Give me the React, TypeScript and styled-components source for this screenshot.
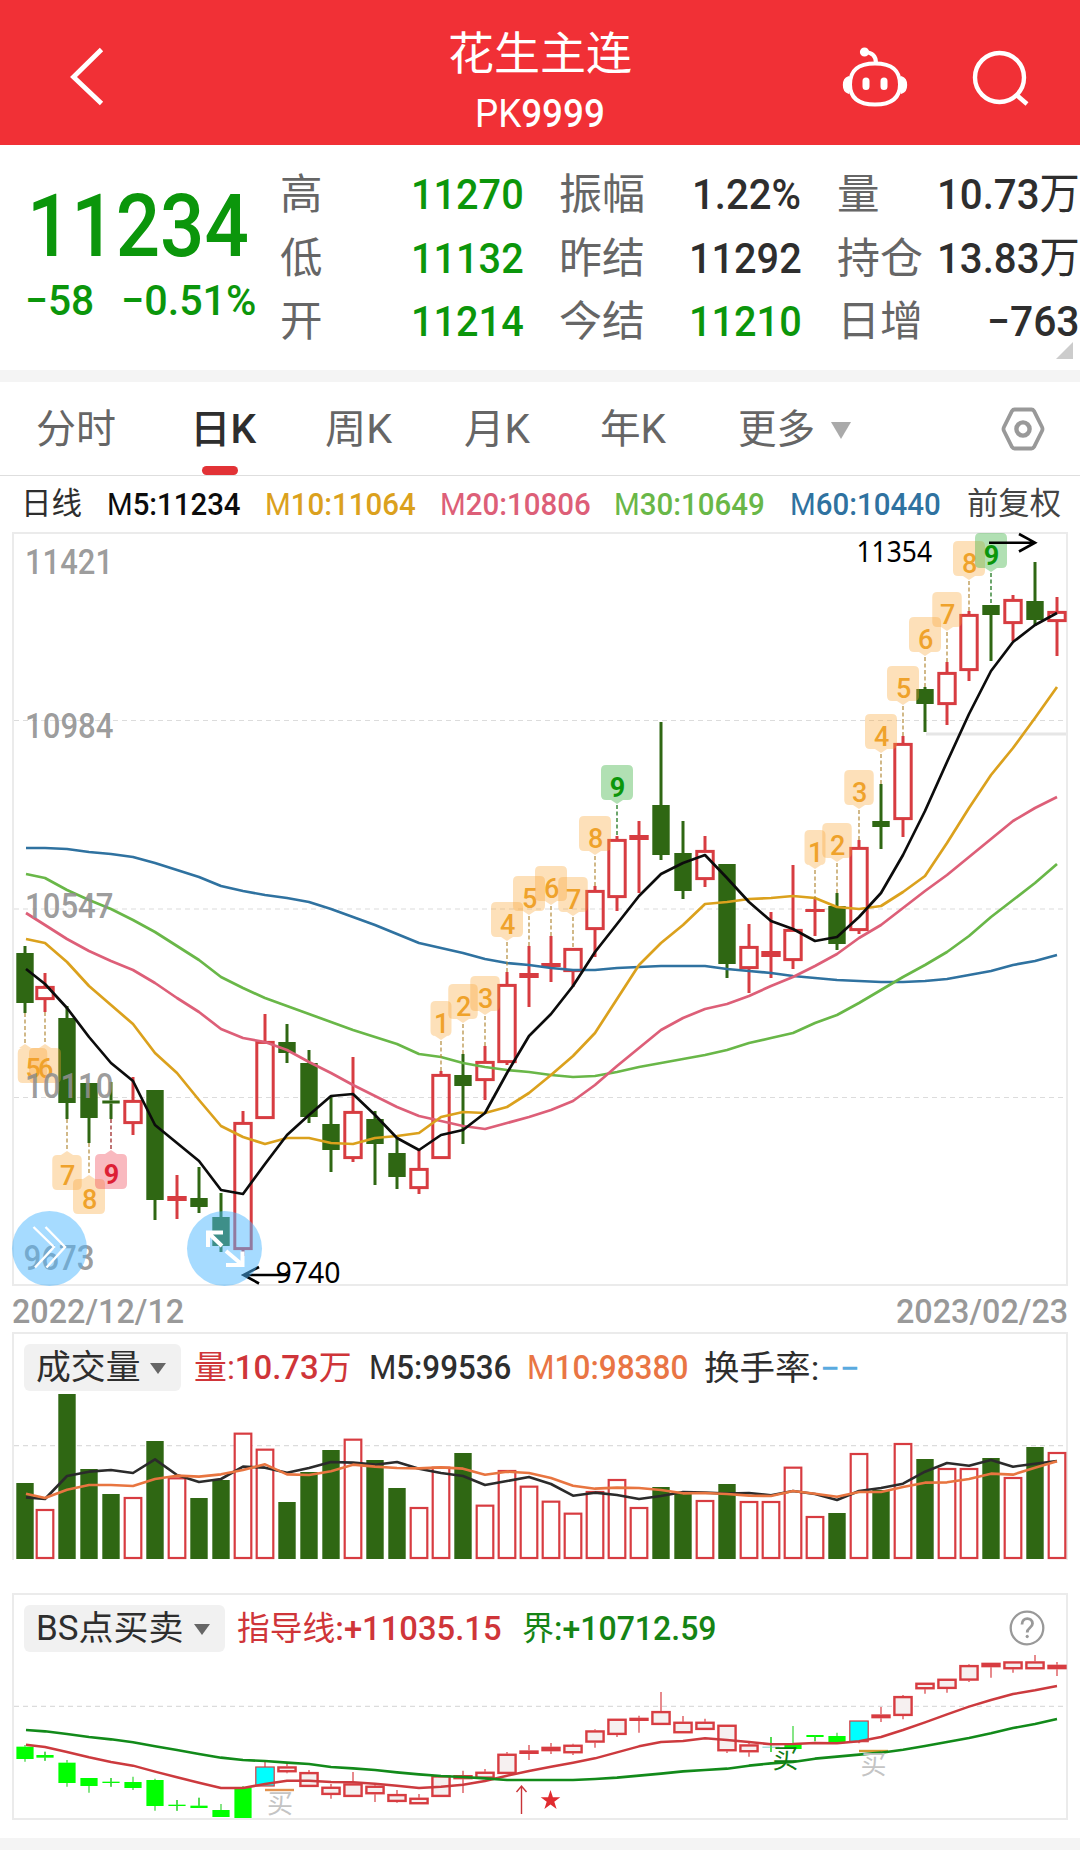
import React, { useLayoutEffect, useRef, useState } from "react";
import styled, { createGlobalStyle } from "styled-components";

const SANS = `Roboto, "Noto Sans CJK SC", sans-serif`;

const C = {
  brand: "#f13036",
  down: "#0b960b",
  ink: "#2e2e2e",
  label: "#666",
  mute: "#999",
  line: "#ebebeb",
  red: "#d73c41",
  bar: "#2f6713",
  ma5: "#0c0c0c",
  ma10: "#dba11d",
  ma20: "#dd5f78",
  ma30: "#69b748",
  ma60: "#2f72a0",
};

const Global = createGlobalStyle`
  * { box-sizing: border-box; }
  body { margin: 0; background: #fff; }
`;

const Page = styled.main`
  width: 1080px;
  height: 1858px;
  overflow: hidden;
  background: #fff;
  font-family: ${SANS};
  color: ${C.ink};
`;

/* ---------- text squeezed to a DIN-like width ---------- */

const FitBox = styled.span<{ $w: number; $size: number; $color?: string; $weight?: number }>`
  display: block;
  flex: none;
  width: ${(p) => p.$w}px;
  height: 1.2em;
  line-height: 1.2;
  font-size: ${(p) => p.$size}px;
  font-weight: ${(p) => p.$weight ?? 500};
  color: ${(p) => p.$color ?? "inherit"};
  white-space: nowrap;
`;
const FitInner = styled.span`
  display: inline-block;
  transform-origin: 0 50%;
`;
const Light = styled.span`
  font-weight: 400;
`;

type FitProps = { w: number; size: number; color?: string; weight?: number; children: React.ReactNode };

function Fit({ w, size, color, weight, children }: FitProps) {
  const ref = useRef<HTMLSpanElement>(null);
  const [scale, setScale] = useState(1);
  useLayoutEffect(() => {
    if (ref.current) setScale(w / ref.current.offsetWidth);
  }, [w]);
  return (
    <FitBox $w={w} $size={size} $color={color} $weight={weight}>
      <FitInner ref={ref} style={{ transform: `scaleX(${scale})` }}>
        {children}
      </FitInner>
    </FitBox>
  );
}

/* ---------- header ---------- */

const Header = styled.header`
  display: grid;
  grid-template-columns: 1fr 190px 1fr;
  height: 145px;
  background: ${C.brand};
  color: #fff;
`;
const HeaderSide = styled.div<{ $end?: boolean }>`
  display: flex;
  justify-content: ${(p) => (p.$end ? "flex-end" : "flex-start")};
  gap: 62px;
  padding: ${(p) => (p.$end ? "44px 48px 0 0" : "44px 0 0 66px")};
`;
const TitleBlock = styled.div`
  display: flex;
  flex-direction: column;
  align-items: center;
  padding-top: 28px;
`;
const Subtitle = styled.div`
  margin-top: 9px;
`;

/* ---------- quote ---------- */

const Quote = styled.section`
  position: relative;
  display: grid;
  grid-template-columns: 280px 279px 278px 243px;
  height: 225px;
`;
const PriceBlock = styled.div`
  display: flex;
  flex-direction: column;
  padding: 30px 0 0 27px;
  color: ${C.down};
`;
const Change = styled.div`
  display: flex;
  gap: 27px;
  margin: -4px 0 0 -2px;
`;
const Col = styled.div<{ $pr: number }>`
  padding: 18px ${(p) => p.$pr}px 0 0;
`;
const Stat = styled.div`
  display: flex;
  align-items: center;
  justify-content: space-between;
  height: 63.6px;
`;
const Corner = styled.i`
  position: absolute;
  right: 7px;
  bottom: 11px;
  border-left: 17px solid transparent;
  border-bottom: 17px solid #ccc;
`;
const Band = styled.div`
  height: 12px;
  background: #f4f4f4;
`;

/* ---------- tabs ---------- */

const Tabs = styled.nav`
  display: grid;
  grid-template-columns: 154px 135px 139px 136px 138px 1fr 44px;
  align-items: center;
  height: 94px;
  padding: 0 35px 0 36px;
  border-bottom: 1px solid #dedede;
`;
const Tab = styled.div<{ $active?: boolean }>`
  position: relative;
  display: flex;
  align-items: center;
  gap: 16px;
  padding-top: 3px;
  color: ${(p) => (p.$active ? C.ink : C.label)};
  &::after {
    content: "";
    display: ${(p) => (p.$active ? "block" : "none")};
    position: absolute;
    left: 12px;
    bottom: -21px;
    width: 36px;
    height: 9px;
    border-radius: 5px;
    background: #e23236;
  }
`;
const Caret = styled.i<{ $w: number; $h: number; $color: string }>`
  border: ${(p) => p.$w / 2}px solid transparent;
  border-bottom: 0;
  border-top: ${(p) => p.$h}px solid ${(p) => p.$color};
`;

const MaRow = styled.div`
  display: grid;
  grid-template-columns: 86px 158px 175px 174px 176px 177px 1fr;
  align-items: center;
  height: 56px;
  padding-left: 21px;
`;

/* ---------- chart panels ---------- */

const Panel = styled.section<{ $h: number; $open?: boolean }>`
  position: relative;
  display: flex;
  flex-direction: column;
  height: ${(p) => p.$h}px;
  margin: 0 12px;
  border: 2px solid ${C.line};
  border-bottom-width: ${(p) => (p.$open ? 0 : 2)}px;
`;
const Plot = styled.svg`
  display: block;
  overflow: visible;
  font-family: ${SANS};
`;
const DateRow = styled.div`
  display: flex;
  justify-content: space-between;
  align-items: center;
  height: 46px;
  padding: 4px 12px 0;
`;
const Legend = styled.div`
  display: flex;
  align-items: center;
  height: 57px;
  padding: 10px 21px 0 10px;
`;
const Chip = styled.div<{ $w: number }>`
  display: flex;
  flex: none;
  align-items: center;
  justify-content: space-between;
  width: ${(p) => p.$w}px;
  height: 47px;
  padding: 1px 15px 0 12px;
  border-radius: 6px;
  background: #f1f1f1;
`;
const LegendItem = styled.div<{ $ml: number }>`
  margin-left: ${(p) => p.$ml}px;
  padding-top: 2px;
`;
const Help = styled.div`
  margin: -2px 0 0 auto;
  height: 36px;
`;
const Spacer = styled.div<{ $h: number }>`
  height: ${(p) => p.$h}px;
`;
const RoundButton = styled.button<{ $left: number }>`
  position: absolute;
  left: ${(p) => p.$left}px;
  bottom: -2px;
  width: 75px;
  height: 75px;
  padding: 0;
  border: 0;
  border-radius: 50%;
  background: rgba(77, 184, 255, 0.5);
`;

/* ---------- data ---------- */

type Kind = "r" | "g" | "s" | "l" | "c";
type Candle = [Kind, number, number, number, number];

const X = (i: number) => (i === 0 ? 25 : 23 + 22 * i);

const CANDLES: Candle[] = [
  ["g", 953, 1003, 946, 1013], ["r", 986, 1000, 973, 1012], ["g", 1018, 1103, 1006, 1119], ["g", 1083, 1118, 1083, 1143],
  ["g", 1100.5, 1103.5, 1082, 1119], ["r", 1100, 1124, 1077, 1135], ["g", 1090, 1200, 1090, 1220], ["s", 1196, 1201, 1175, 1219],
  ["g", 1198, 1207, 1167, 1213], ["g", 1217, 1246, 1193, 1252], ["r", 1122, 1250, 1111, 1256], ["r", 1041, 1119, 1014, 1119],
  ["g", 1042, 1053, 1024, 1063], ["g", 1063, 1117, 1050, 1123], ["g", 1124, 1150, 1097, 1172], ["r", 1111, 1159, 1057, 1162],
  ["g", 1119, 1144, 1111, 1185], ["g", 1153, 1177, 1138, 1189], ["r", 1168, 1189, 1150, 1194], ["r", 1074, 1159, 1071, 1159],
  ["g", 1075, 1086, 1054, 1144], ["r", 1061, 1081, 1046, 1100], ["r", 984, 1063, 972, 1065], ["s", 973, 978, 946, 1007],
  ["s", 963, 967, 936, 982], ["r", 948, 972, 948, 987], ["r", 890, 930, 886, 957], ["r", 839, 898, 836, 911],
  ["s", 835, 840, 821, 893], ["g", 805, 855, 722, 860], ["g", 853, 891, 821, 899], ["r", 850, 880, 836, 887],
  ["g", 864, 964, 864, 978], ["r", 946, 969, 924, 993], ["s", 951, 957, 912, 978], ["r", 929, 961, 865, 969],
  ["s", 909, 912, 899, 936], ["g", 906, 944, 893, 950], ["r", 847, 931, 840, 934], ["g", 821, 827, 784, 849],
  ["r", 743, 820, 736, 837], ["g", 689, 704, 687, 732], ["r", 672, 705, 662, 725], ["r", 614, 671, 611, 681],
  ["g", 605, 615, 605, 661], ["r", 599, 624, 595, 641], ["g", 601, 620, 562, 626], ["r", 611, 622, 597, 656],
];

const M5 = [969, 984, 1008, 1037, 1063, 1081, 1125, 1143, 1161, 1190, 1194, 1164, 1135, 1115, 1096, 1094, 1115, 1138, 1150, 1135, 1130, 1113, 1073, 1036, 1014, 986, 952, 924, 896, 874, 863, 855, 878, 902, 921, 929, 941, 937, 917, 893, 855, 811, 762, 714, 671, 642, 625, 613];
const M10 = [939, 943, 962, 986, 1005, 1024, 1053, 1073, 1100, 1126, 1137, 1144, 1138, 1138, 1143, 1144, 1138, 1136, 1133, 1117, 1112, 1113, 1107, 1093, 1075, 1056, 1033, 999, 965, 943, 925, 904, 902, 899, 898, 896, 898, 907, 909, 906, 892, 876, 843, 808, 775, 748, 718, 687];
const M20 = [913, 925, 939, 951, 961, 970, 983, 998, 1012, 1029, 1038, 1042, 1050, 1062, 1073, 1085, 1096, 1107, 1116, 1121, 1126, 1129, 1123, 1117, 1110, 1101, 1085, 1066, 1048, 1030, 1018, 1009, 1004, 996, 986, 977, 966, 954, 938, 925, 908, 891, 875, 857, 839, 821, 808, 797];
const M30 = [874, 878, 890, 900, 909, 920, 932, 946, 960, 977, 988, 998, 1006, 1014, 1022, 1030, 1037, 1044, 1054, 1057, 1063, 1067, 1070, 1072, 1075, 1077, 1076, 1072, 1067, 1063, 1059, 1055, 1050, 1043, 1038, 1033, 1023, 1015, 1003, 990, 977, 965, 952, 936, 917, 900, 883, 864];
const M60 = [848, 848, 849, 852, 854, 857, 863, 870, 877, 886, 891, 895, 898, 902, 909, 917, 925, 934, 943, 948, 953, 959, 963, 965, 968, 970, 970, 968, 967, 966, 966, 966, 969, 971, 973, 976, 978, 980, 981, 982, 982, 981, 979, 975, 971, 965, 961, 955];

type Mark = { i: number; n: string; y: number; tone?: "green" | "red"; below?: boolean; dx?: number };
const MARKS: Mark[] = [
  { i: 0, n: "5", y: 1044, below: true, dx: 7.5 }, { i: 1, n: "6", y: 1044, below: true }, { i: 2, n: "7", y: 1151, below: true },
  { i: 3, n: "8", y: 1175, below: true }, { i: 4, n: "9", y: 1150, below: true, tone: "red" },
  { i: 19, n: "1", y: 1001 }, { i: 20, n: "2", y: 984 }, { i: 21, n: "3", y: 976 }, { i: 22, n: "4", y: 902 },
  { i: 23, n: "5", y: 876 }, { i: 24, n: "6", y: 866 }, { i: 25, n: "7", y: 877 }, { i: 26, n: "8", y: 816 },
  { i: 27, n: "9", y: 765, tone: "green" },
  { i: 36, n: "1", y: 830 }, { i: 37, n: "2", y: 823 }, { i: 38, n: "3", y: 770 }, { i: 39, n: "4", y: 714 },
  { i: 40, n: "5", y: 666 }, { i: 41, n: "6", y: 617 }, { i: 42, n: "7", y: 592 }, { i: 43, n: "8", y: 541 },
  { i: 44, n: "9", y: 533, tone: "green" },
];

const VOL = [489, 570, 222, 447, 522, 534, 363, 475, 534, 480, 341, 389, 546, 456, 390, 359, 420, 504, 564, 443, 399, 557, 453, 500, 545, 581, 516, 480, 564, 501, 519, 543, 492, 546, 546, 443, 591, 579, 402, 510, 372, 417, 447, 447, 414, 474, 381, 399];
const VM5 = [532, 537, 468, 455, 450, 459, 418, 465, 486, 477, 440, 443, 458, 444, 426, 428, 434, 426, 446, 459, 468, 495, 483, 471, 492, 527, 518, 525, 537, 528, 516, 518, 521, 519, 526, 513, 522, 540, 513, 504, 491, 455, 429, 437, 420, 440, 431, 423];
const VM10 = [521, 534, 509, 495, 495, 498, 477, 467, 470, 463, 450, 433, 463, 465, 454, 434, 440, 444, 445, 442, 446, 464, 455, 459, 474, 497, 506, 503, 504, 510, 520, 519, 522, 527, 528, 513, 521, 530, 516, 516, 501, 488, 487, 477, 461, 464, 443, 424];
const GREEN_VOL = new Set([0, 2, 3, 4, 6, 8, 9, 12, 13, 14, 16, 17, 20, 29, 30, 32, 37, 39, 41, 44, 46]);

const BS: Candle[] = [
  ["l", 500, 537, 495, 545], ["l", 525, 533, 515, 542], ["l", 548, 609, 540, 620], ["l", 594, 618, 594, 638],
  ["l", 605, 609, 594, 620], ["l", 606, 624, 590, 630], ["l", 600, 678, 596, 692], ["l", 674, 678, 660, 692],
  ["l", 677, 684, 653, 684], ["l", 690, 711, 672, 711], ["l", 622, 714, 618, 714], ["c", 561, 618, 542, 618],
  ["r", 559, 577, 550, 580], ["r", 576, 621, 570, 621], ["r", 620, 645, 612, 656], ["r", 610, 651, 576, 651],
  ["r", 617, 643, 615, 666], ["r", 642, 666, 630, 668], ["r", 653, 673, 642, 673], ["r", 586, 651, 586, 651],
  ["s", 585, 598, 572, 639], ["r", 575, 596, 567, 596], ["r", 521, 582, 516, 582], ["s", 511, 522, 495, 540],
  ["s", 500, 514, 489, 522], ["r", 494, 520, 491, 525], ["r", 451, 488, 448, 503], ["r", 416, 465, 416, 471],
  ["s", 413, 423, 407, 458], ["r", 393, 435, 336, 435], ["r", 425, 460, 408, 460], ["r", 425, 450, 416, 450],
  ["r", 434, 514, 434, 519], ["r", 493, 517, 485, 530], ["l", 500, 503, 471, 516], ["l", 490, 507, 438, 507],
  ["l", 465, 471, 465, 484], ["l", 468, 488, 458, 488], ["c", 423, 485, 423, 490], ["s", 403, 415, 381, 426],
  ["r", 348, 408, 345, 418], ["r", 308, 328, 308, 341], ["r", 296, 327, 296, 338], ["r", 255, 302, 253, 306],
  ["s", 248, 262, 248, 293], ["r", 244, 268, 244, 278], ["r", 244, 268, 225, 268], ["s", 254, 268, 246, 288],
];
const GUIDE = [494, 501, 516, 532, 546, 557, 575, 592, 608, 624, 624, 612, 602, 602, 606, 607, 611, 617, 624, 620, 614, 603, 587, 573, 560, 548, 535, 517, 499, 486, 483, 475, 480, 486, 493, 492, 489, 490, 484, 471, 450, 427, 403, 380, 360, 342, 331, 318];
const BOUND = [450, 454, 462, 471, 478, 487, 499, 510, 522, 533, 540, 543, 548, 552, 561, 565, 570, 577, 583, 588, 591, 595, 600, 600, 600, 600, 597, 593, 587, 581, 574, 570, 566, 557, 550, 546, 536, 530, 524, 518, 509, 498, 486, 474, 460, 444, 432, 417];

const volY = (v: number) => 1320 + v / 3;
const bsY = (v: number) => 1580 + v / 3;

/* ---------- chart pieces ---------- */

function Curve({ data, color, y = (v) => v, w = 2.7 }: { data: number[]; color: string; y?: (v: number) => number; w?: number }) {
  const points = data.map((v, i) => `${i === 0 ? 26 : X(i)},${y(v)}`).join(" ");
  return <polyline points={points} fill="none" stroke={color} strokeWidth={w} strokeLinejoin="round" />;
}

function Grid({ y }: { y: number }) {
  return <line x1={14} x2={1066} y1={y} y2={y} stroke="#dcdcdc" strokeWidth={1.2} strokeDasharray="5 4" />;
}

function CandleShape({ x, c }: { x: number; c: Candle }) {
  const [kind, top, bottom, hi, lo] = c;
  const color = kind === "g" ? C.bar : C.red;
  return (
    <g>
      <line x1={x} x2={x} y1={hi} y2={top} stroke={color} strokeWidth={3} />
      <line x1={x} x2={x} y1={bottom} y2={lo} stroke={color} strokeWidth={3} />
      {kind === "r" ? (
        <rect x={x - 8.2} y={top + 1.4} width={16.4} height={bottom - top - 2.8} fill="none" stroke={color} strokeWidth={3} />
      ) : (
        <rect x={x - (kind === "s" ? 9.7 : 8.7)} y={top} width={kind === "s" ? 19.4 : 17.4} height={bottom - top} fill={color} />
      )}
    </g>
  );
}

function MarkShape({ m }: { m: Mark }) {
  const lineX = X(m.i);
  const x = lineX + (m.dx ?? 0);
  const w = m.n === "1" ? 21 : "237".includes(m.n) || m.dx ? 29.5 : 32;
  const fill = m.tone === "green" ? "rgba(70,180,75,.42)" : m.tone === "red" ? "rgba(238,60,78,.36)" : "rgba(250,165,50,.34)";
  const ink = m.tone === "green" ? "#0b960b" : m.tone === "red" ? "#dd1f35" : "#efa22b";
  const dash = m.tone === "green" ? "#0b6b0b" : m.tone === "red" ? "#961818" : "#b38a3a";
  const a = x - w / 2;
  const path = m.below
    ? `M${a + 5},${m.y + 4}H${lineX - 6}L${lineX},${m.y}L${lineX + 6},${m.y + 4}H${a + w - 5}q5,0 5,5v25q0,5 -5,5H${a + 5}q-5,0 -5,-5v-25q0,-5 5,-5z`
    : `M${a + 5},${m.y}h${w - 10}q5,0 5,5v25q0,5 -5,5H${x + 6}L${x},${m.y + 39}L${x - 6},${m.y + 35}H${a + 5}q-5,0 -5,-5v-25q0,-5 5,-5z`;
  const c = CANDLES[m.i];
  const y1 = m.below ? c[4] : m.y + 40;
  const y2 = m.below ? m.y : c[3];
  return (
    <g>
      <line x1={lineX} x2={lineX} y1={y1} y2={y2} stroke={dash} strokeWidth={1.2} strokeDasharray="4 2.5" />
      <path d={path} fill={fill} />
      <text x={x + 0.6} y={m.y + (m.below ? 33.5 : 31.5)} fontSize={27} fontWeight={m.tone ? 700 : 500} fill={ink} textAnchor="middle">
        {m.n}
      </text>
    </g>
  );
}

const AXIS: [string, number, number, number][] = [
  ["11421", 574, 25, 88], ["10984", 738, 25, 88.5], ["10547", 918, 25, 88.5], ["10110", 1098, 25, 88.5], ["9673", 1270, 23.5, 71],
];

function PriceChart() {
  return (
    <Plot width={1052} height={750} viewBox="14 534 1052 750">
      {[720.5, 909, 1097.5].map((y) => (
        <Grid key={y} y={y} />
      ))}
      <line x1={926} x2={1066} y1={734} y2={734} stroke="#e6e6e6" strokeWidth={3} />
      {CANDLES.map((c, i) => (
        <CandleShape key={i} x={X(i)} c={c} />
      ))}
      <Curve data={M60} color={C.ma60} />
      <Curve data={M30} color={C.ma30} />
      <Curve data={M20} color={C.ma20} />
      <Curve data={M10} color={C.ma10} />
      <Curve data={M5} color={C.ma5} />
      {MARKS.map((m) => (
        <MarkShape key={m.i} m={m} />
      ))}
      {AXIS.map(([t, y, x, w]) => (
        <text key={t} x={x} y={y} fontSize={34.5} fontWeight={500} fill="#8f8f8f" fillOpacity={0.9} textLength={w} lengthAdjust="spacingAndGlyphs">
          {t}
        </text>
      ))}
      <g fontFamily={`"Noto Sans", sans-serif`} fontSize={28.5} fill="#000">
        <text x={856.5} y={562} textLength={75.5} lengthAdjust="spacingAndGlyphs">11354</text>
        <text x={275.5} y={1283} textLength={65} lengthAdjust="spacingAndGlyphs">9740</text>
      </g>
      <g fill="none" stroke="#000" strokeWidth={2.6}>
        <path d="M989,542.7H1034M1019,534L1035,542.7L1019,551.5" />
        <path d="M289,1275H245M259,1267L243.5,1275L259,1283.5" />
      </g>
    </Plot>
  );
}

function VolumeChart() {
  return (
    <Plot width={1052} height={168} viewBox="14 1391 1052 168">
      <Grid y={1445.7} />
      {VOL.map((v, i) => {
        const top = volY(v);
        return GREEN_VOL.has(i) ? (
          <rect key={i} x={X(i) - 8.7} y={top} width={17.4} height={1559 - top} fill={C.bar} />
        ) : (
          <rect key={i} x={X(i) - 8.3} y={top} width={16.6} height={1558 - top} fill="#fff" stroke={C.red} strokeWidth={2.2} />
        );
      })}
      <Curve data={VM5} color="#2b2b2b" y={volY} w={2.6} />
      <Curve data={VM10} color="#e87540" y={volY} w={2.6} />
    </Plot>
  );
}

function BsCandle({ x, c }: { x: number; c: Candle }) {
  const [kind, t, b, h, l] = c;
  const top = bsY(t);
  const height = (b - t) / 3;
  const wick = kind === "l" ? "#35d435" : C.red;
  return (
    <g>
      <path d={`M${x},${bsY(h)}V${top}M${x},${bsY(b)}V${bsY(l)}`} stroke={wick} strokeWidth={1.2} />
      {kind === "r" && (
        <rect x={x - 8.6} y={top + 1.1} width={17.2} height={height - 2.2} fill="#f6f0f0" stroke={C.red} strokeWidth={2.4} />
      )}
      {kind === "s" && <rect x={x - 9.7} y={top} width={19.4} height={height} fill={C.red} />}
      {kind === "l" && (
        <>
          <rect x={x - 8.6} y={top} width={17.2} height={height} fill={t === 500 && b === 503 ? "#7cc" : "#0f0"} />
          {height < 3 && <line x1={x} x2={x} y1={bsY(h)} y2={bsY(l)} stroke={wick} strokeWidth={1.2} />}
        </>
      )}
      {kind === "c" && <rect x={x - 9.2} y={top} width={18.4} height={height} fill="#0ff" stroke={C.red} strokeWidth={1.2} />}
    </g>
  );
}

function BsChart() {
  return (
    <Plot width={1052} height={167} viewBox="14 1652 1052 167">
      <Grid y={1706.3} />
      {BS.map((c, i) => (
        <BsCandle key={i} x={X(i)} c={c} />
      ))}
      <line x1={265} x2={294} y1={1790} y2={1790} stroke="#e2924f" strokeWidth={2.4} />
      <line x1={859} x2={888} y1={1751} y2={1751} stroke="#d0982f" strokeWidth={2.4} />
      <Curve data={GUIDE} color="#cc3a3e" y={bsY} w={2.5} />
      <Curve data={BOUND} color="#128a1a" y={bsY} w={2.6} />
      <g fontSize={26}>
        <text x={267} y={1812.5} fill="#c4c4c4">买</text>
        <text x={772.5} y={1768} fill="#0f7d14">买</text>
        <text x={860.5} y={1774} fill="#c4c4c4">买</text>
      </g>
      <path d="M521.5,1814V1787M516.5,1792L521.5,1786L526.5,1792" fill="none" stroke="#c83438" strokeWidth={1.4} />
      <path
        d="M550.5,1790L552.9,1797.2H560.3L554.3,1801.7L556.6,1809L550.5,1804.5L544.4,1809L546.7,1801.7L540.7,1797.2H548.1Z"
        fill="#e02b2f"
      />
    </Plot>
  );
}

/* ---------- icons ---------- */

const BackIcon = () => (
  <svg width="40" height="66" viewBox="0 0 40 66" fill="none" stroke="#fff" strokeWidth="4.8">
    <path d="M35.5 5.5L7.5 33L35.5 59.5" />
  </svg>
);
const RobotIcon = () => (
  <svg width="66" height="64" viewBox="842 44 66 64" fill="none" stroke="#fff" strokeWidth="4">
    <path d="M875 63.5C893 63.5 900 71 900 84.500C900 98 892 104.500 875 104.500C858 104.500 850 98 850 84.500C850 71 857 63.500 875 63.500Z" />
    <path d="M876 63C876 56 872 52.500 865 52" />
    <circle cx="864.5" cy="52" r="2.6" fill="#fff" />
    <path d="M848.500 77C842 79 842 91 848.500 93Z M901.500 77C908 79 908 91 901.500 93Z" fill="#fff" strokeWidth="1.6" />
    <path d="M866 81V86.500M884 81V86.500" strokeWidth="7" strokeLinecap="round" />
  </svg>
);
const SearchIcon = () => (
  <svg width="62" height="64" viewBox="970 44 62 64" fill="none" stroke="#fff" strokeWidth="4.400">
    <circle cx="999.5" cy="77.5" r="24.5" />
    <path d="M1016 94.500L1027 104" strokeWidth="4.4" />
  </svg>
);
const GearIcon = () => (
  <svg width="44" height="44" viewBox="0 0 44 44" fill="none" stroke="#999" strokeWidth="3.8">
    <path d="M13.500 2.500H30.500Q32 2.500 33 4L41 20Q42 22 41 24L33 40Q32 41.500 30.500 41.500H13.500Q12 41.500 11 40L3 24Q2 22 3 20L11 4Q12 2.500 13.500 2.500Z" />
    <circle cx="22" cy="22" r="6.600" strokeWidth="4.4" />
  </svg>
);
const HelpIcon = () => (
  <svg width="36" height="36" viewBox="0 0 36 36" fill="none" stroke="#999" strokeWidth="2.3">
    <circle cx="18" cy="18" r="16.300" />
    <path d="M13 14.500C13 6.500 23.500 7 23.500 13.500C23.500 18 18.200 17.500 18.200 22.500" strokeWidth="2.8" />
    <circle cx="18.200" cy="26.500" r="1.200" fill="#999" strokeWidth="1" />
  </svg>
);

/* ---------- page ---------- */

type StatDef = { label: string; value: string; w: number; color?: string };
const STATS: { pr: number; rows: StatDef[] }[] = [
  {
    pr: 36,
    rows: [
      { label: "高", value: "11270", w: 112.5, color: C.down },
      { label: "低", value: "11132", w: 112.5, color: C.down },
      { label: "开", value: "11214", w: 112.5, color: C.down },
    ],
  },
  {
    pr: 36,
    rows: [
      { label: "振幅", value: "1.22%", w: 109 },
      { label: "昨结", value: "11292", w: 112.5 },
      { label: "今结", value: "11210", w: 112.5, color: C.down },
    ],
  },
  {
    pr: 0,
    rows: [
      { label: "量", value: "10.73万", w: 143 },
      { label: "持仓", value: "13.83万", w: 143 },
      { label: "日增", value: "−763", w: 93 },
    ],
  },
];

const renderValue = (v: string) =>
  v.endsWith("万") ? (
    <>
      {v.slice(0, -1)}
      <Light>万</Light>
    </>
  ) : (
    v
  );

const TABS: { text: string; w: number; active?: boolean }[] = [
  { text: "分时", w: 80 },
  { text: "日K", w: 66, active: true },
  { text: "周K", w: 67 },
  { text: "月K", w: 66 },
  { text: "年K", w: 66 },
];

const AVERAGES: [string, string, number, string][] = [
  ["M", "5:11234", 134, C.ma5],
  ["M", "10:11064", 151, C.ma10],
  ["M", "20:10806", 151, C.ma20],
  ["M", "30:10649", 151, C.ma30],
  ["M", "60:10440", 151, C.ma60],
];

export default function App() {
  return (
    <Page>
      <Global />
      <Header>
        <HeaderSide>
          <BackIcon />
        </HeaderSide>
        <TitleBlock>
          <Fit w={184} size={45} weight={400}>花生主连</Fit>
          <Subtitle>
            <Fit w={130} size={39}>
              <Light>PK</Light>9999
            </Fit>
          </Subtitle>
        </TitleBlock>
        <HeaderSide $end>
          <RobotIcon />
          <SearchIcon />
        </HeaderSide>
      </Header>

      <Quote>
        <PriceBlock>
          <Fit w={222} size={86.5}>11234</Fit>
          <Change>
            <Fit w={69} size={42.5}>−58</Fit>
            <Fit w={135} size={42.5}>−0.51%</Fit>
          </Change>
        </PriceBlock>
        {STATS.map((col, k) => (
          <Col key={k} $pr={col.pr}>
            {col.rows.map((r) => (
              <Stat key={r.label}>
                <Fit w={r.label.length * 43} size={42.5} color={C.label} weight={400}>{r.label}</Fit>
                <Fit w={r.w} size={43} color={r.color}>{renderValue(r.value)}</Fit>
              </Stat>
            ))}
          </Col>
        ))}
        <Corner />
      </Quote>
      <Band />

      <Tabs>
        {TABS.map((t) => (
          <Tab key={t.text} $active={t.active}>
            <Fit w={t.w} size={40} weight={t.active ? 500 : 400}>{t.text}</Fit>
          </Tab>
        ))}
        <Tab>
          <Fit w={77} size={40} weight={400}>更多</Fit>
          <Caret $w={21} $h={17} $color="#aaa" />
        </Tab>
        <GearIcon />
      </Tabs>

      <MaRow>
        <Fit w={61} size={31} weight={400}>日线</Fit>
        {AVERAGES.map(([m, rest, w, color]) => (
          <Fit key={rest} w={w} size={32} color={color}>
            <Light>{m}</Light>
            {rest}
          </Fit>
        ))}
        <Fit w={94} size={31} weight={400} color="#444">前复权</Fit>
      </MaRow>

      <Panel $h={754}>
        <PriceChart />
        <RoundButton $left={-2}>
          <svg width="75" height="75" viewBox="12 1211 75 75" fill="none" stroke="#fff" strokeWidth="2.4">
            <path d="M33.500 1227L54 1247L35 1267.500M45.500 1227L65 1247L46.500 1267.500" />
          </svg>
        </RoundButton>
        <RoundButton $left={173}>
          <svg width="75" height="75" viewBox="187 1211 75 75" fill="none" stroke="#fff" strokeWidth="4">
            <path d="M223 1232.500H208V1247M208 1232.500L222 1246M226 1265H242.500V1251.500M242.500 1265L226 1251" />
          </svg>
        </RoundButton>
      </Panel>

      <DateRow>
        <Fit w={172} size={34} color={C.mute}>2022/12/12</Fit>
        <Fit w={172} size={34} color={C.mute}>2023/02/23</Fit>
      </DateRow>

      <Panel $h={228} $open>
        <Legend>
          <Chip $w={157}>
            <Fit w={105} size={34.5} weight={400}>成交量</Fit>
            <Caret $w={16} $h={11} $color="#666" />
          </Chip>
          <LegendItem $ml={13}>
            <Fit w={158} size={33.5} color="#cf3539">
              <Light>量:</Light>10.73<Light>万</Light>
            </Fit>
          </LegendItem>
          <LegendItem $ml={17}>
            <Fit w={142} size={33.5}>
              <Light>M</Light>5:99536
            </Fit>
          </LegendItem>
          <LegendItem $ml={16}>
            <Fit w={161} size={33.5} color="#e97544">
              <Light>M</Light>10:98380
            </Fit>
          </LegendItem>
          <LegendItem $ml={16}>
            <Fit w={115} size={34} weight={400}>换手率:</Fit>
          </LegendItem>
          <LegendItem $ml={1}>
            <Fit w={39} size={34} color="#5aaadf">−−</Fit>
          </LegendItem>
        </Legend>
        <VolumeChart />
      </Panel>

      <Spacer $h={33} />

      <Panel $h={227}>
        <Legend>
          <Chip $w={201}>
            <Fit w={147} size={34.5} weight={400}>BS点买卖</Fit>
            <Caret $w={16} $h={11} $color="#666" />
          </Chip>
          <LegendItem $ml={12}>
            <Fit w={265} size={33.5} color="#cf3539">
              <Light>指导线</Light>:+11035.15
            </Fit>
          </LegendItem>
          <LegendItem $ml={20}>
            <Fit w={195} size={33.5} color="#158415">
              <Light>界</Light>:+10712.59
            </Fit>
          </LegendItem>
          <Help>
            <HelpIcon />
          </Help>
        </Legend>
        <BsChart />
      </Panel>

      <Spacer $h={18} />
      <Band />
    </Page>
  );
}
